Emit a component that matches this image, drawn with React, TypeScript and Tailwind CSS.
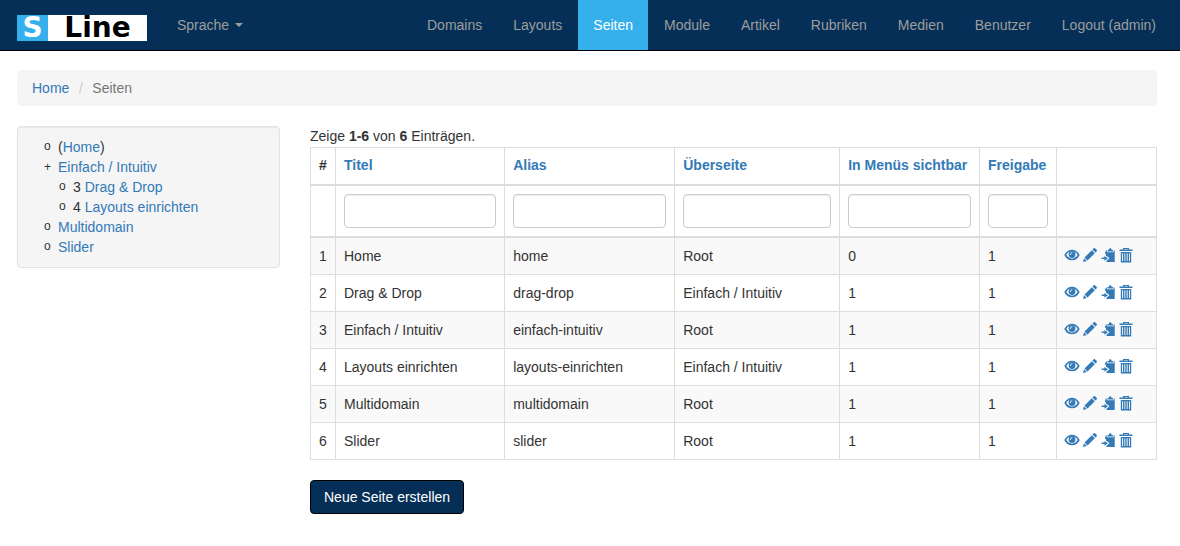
const navItems = ["Domains", "Layouts", "Seiten", "Module", "Artikel", "Rubriken", "Medien", "Benutzer", "Logout (admin)"];

const columns = ["Titel", "Alias", "Überseite", "In Menüs sichtbar", "Freigabe"];

const rows: string[][] = [
  ["Home", "home", "Root", "0", "1"],
  ["Drag & Drop", "drag-drop", "Einfach / Intuitiv", "1", "1"],
  ["Einfach / Intuitiv", "einfach-intuitiv", "Root", "1", "1"],
  ["Layouts einrichten", "layouts-einrichten", "Einfach / Intuitiv", "1", "1"],
  ["Multidomain", "multidomain", "Root", "1", "1"],
  ["Slider", "slider", "Root", "1", "1"],
];

const icon = "block size-3.5 overflow-visible";

function EyeIcon() {
  return (
    <svg viewBox="0 0 14 14" className={icon} fill="none" aria-hidden="true">
      <path
        d="M.3 7C2 4 4.400 2.500 7 2.500S12 4 13.700 7C12 10 9.600 11.500 7 11.500S2 10 .3 7Z"
        stroke="currentColor"
        strokeWidth="1.700"
        strokeLinejoin="round"
      />
      <circle cx="7" cy="6.500" r="3.400" fill="currentColor" />
      <path d="M5.400 6.400c0-1 .6-1.600 1.500-1.600" stroke="white" strokeWidth="1" strokeLinecap="round" />
    </svg>
  );
}

function PencilIcon() {
  return (
    <svg viewBox="0 0 14 14" className={icon} fill="currentColor" aria-hidden="true">
      <path d="M10.600.4c.5-.5 1.100-.5 1.600 0l1.400 1.400c.5.5.5 1.100 0 1.600l-1.200 1.200-3-3ZM8.800 2.200l3 3-7.300 7.300-3-3ZM1 10.200 3.800 13 0 14Z" />
    </svg>
  );
}

function PasteIcon() {
  return (
    <svg viewBox="0 0 14 14" className={icon} fill="currentColor" aria-hidden="true">
      <path d="M6.500 3.500V2h1.300C7.900.9 8.400.3 9.200.3s1.400.6 1.500 1.700H12v1.500Z" />
      <path d="M5 2.500h.8v1.800h6.900V2.500h1V14H5.500v-1.200L8.500 10.300 5.800 8H5V6.300L3.800 5.300Z" />
      <path d="M.6 9.500h2.800V7.900L7 10.300l-3.600 2.500v-1.700H.6Z" />
    </svg>
  );
}

function TrashIcon() {
  return (
    <svg viewBox="0 0 14 14" className={icon} fill="currentColor" aria-hidden="true">
      <path d="M4 1.500V0h6v1.500h3.500V3H.5V1.500Zm1.200 0h3.600V1H5.200Z" fillRule="evenodd" />
      <path
        d="M1.800 4h10.400v10.500H1.800Zm1.300 1.300v7.700H4V5.300Zm2.300 0v7.700h.9V5.300Zm2.300 0v7.700h.9V5.300Zm2.300 0v7.700h.9V5.300Z"
        fillRule="evenodd"
      />
    </svg>
  );
}

const actions = [
  { label: "Anzeigen", Icon: EyeIcon },
  { label: "Bearbeiten", Icon: PencilIcon },
  { label: "Kopieren", Icon: PasteIcon },
  { label: "Löschen", Icon: TrashIcon },
];

function TreeLink({ children }: { children: string }) {
  return <a href="#" className="text-[#337ab7] hover:underline">{children}</a>;
}

function Marker({ children }: { children: string }) {
  return <span className="w-3.5 shrink-0 text-xs leading-[18px]">{children}</span>;
}

function Sidebar() {
  return (
    <nav
      aria-label="Seitenbaum"
      className="rounded border border-[#e3e3e3] bg-[#f5f5f5] py-2.5 pr-2 pl-[26px] shadow-[inset_0_1px_1px_rgba(0,0,0,0.05)]"
    >
      <ul>
        <li className="flex"><Marker>o</Marker><span>(<TreeLink>Home</TreeLink>)</span></li>
        <li>
          <div className="flex">
            <span className="w-3.5 shrink-0 text-xs leading-5">+</span>
            <TreeLink>Einfach / Intuitiv</TreeLink>
          </div>
          <ul className="pl-[15px]">
            <li className="flex"><Marker>o</Marker><span>3 <TreeLink>Drag &amp; Drop</TreeLink></span></li>
            <li className="flex"><Marker>o</Marker><span>4 <TreeLink>Layouts einrichten</TreeLink></span></li>
          </ul>
        </li>
        <li className="flex"><Marker>o</Marker><TreeLink>Multidomain</TreeLink></li>
        <li className="flex"><Marker>o</Marker><TreeLink>Slider</TreeLink></li>
      </ul>
    </nav>
  );
}

function PageTable() {
  return (
    <table className="w-full table-fixed border-collapse border border-[#ddd] text-left">
      <colgroup>
        <col className="w-[25px]" />
        <col className="w-[20%]" />
        <col className="w-[20.1%]" />
        <col className="w-[19.5%]" />
        <col />
        <col className="w-[77px]" />
        <col className="w-[100px]" />
      </colgroup>
      <thead>
        <tr>
          <th className="border border-b-2 border-[#ddd] px-2 pt-[7px] pb-[9px] whitespace-nowrap">#</th>
          {columns.map((c) => (
            <th key={c} className="border border-b-2 border-[#ddd] px-2 pt-[7px] pb-[9px] whitespace-nowrap">
              <a href="#" className="text-[#337ab7] hover:underline">{c}</a>
            </th>
          ))}
          <td className="border border-b-2 border-[#ddd] p-2" />
        </tr>
        <tr>
          <td className="border border-b-2 border-[#ddd] p-2" />
          {columns.map((c) => (
            <td key={c} className="border border-b-2 border-[#ddd] p-2">
              <input
                type="text"
                aria-label={c}
                className="block h-[34px] w-full rounded border border-[#ccc] bg-white px-3 py-1.5 text-[#555] shadow-[inset_0_1px_1px_rgba(0,0,0,0.075)]"
              />
            </td>
          ))}
          <td className="border border-b-2 border-[#ddd] p-2" />
        </tr>
      </thead>
      <tbody>
        {rows.map((row, r) => (
          <tr key={row[1]} className="odd:bg-[#f9f9f9]">
            <td className="border border-[#ddd] p-2">{r + 1}</td>
            {row.map((cell, c) => (
              <td key={columns[c]} className="border border-[#ddd] p-2">{cell}</td>
            ))}
            <td className="border border-[#ddd] px-2 pt-2 pb-2.5">
              <div className="flex gap-1 text-[#337ab7]">
                {actions.map(({ label, Icon }) => (
                  <a key={label} href="#" aria-label={label}><Icon /></a>
                ))}
              </div>
            </td>
          </tr>
        ))}
      </tbody>
    </table>
  );
}

export default function App() {
  return (
    <div className="min-h-screen bg-white font-['Liberation_Sans',Arial,sans-serif] text-sm leading-5 text-[#333]">
      <header className="border-b border-black bg-[#052f56] pr-[9px] pl-[17px]">
        <div className="flex h-[50px] items-center">
          <a
            href="#"
            aria-label="SLine"
            className="mt-1.5 flex shrink-0 font-['DejaVu_Sans',sans-serif] text-[28px] leading-[26px] font-bold"
          >
            <span className="w-[31px] bg-[#36b0ed] text-center text-white">S</span>
            <span className="w-[99px] bg-white text-center text-black">Line</span>
          </a>
          <button type="button" className="ml-[15px] flex items-center gap-1.5 px-[15px] py-[15px] text-[#9d9d9d]">
            Sprache
            <svg viewBox="0 0 8 4" className="h-1 w-2" fill="currentColor" aria-hidden="true">
              <path d="M0 0h8L4 4Z" />
            </svg>
          </button>
          <nav className="ml-auto flex gap-px">
            {navItems.map((item) => (
              <a
                key={item}
                href="#"
                className={
                  item === "Seiten"
                    ? "bg-[#36b0ed] p-[15px] whitespace-nowrap text-white"
                    : "p-[15px] whitespace-nowrap text-[#9d9d9d] hover:text-white"
                }
              >
                {item}
              </a>
            ))}
          </nav>
        </div>
      </header>

      <main className="pt-[19px] pr-[23px] pb-8 pl-[17px]">
        <nav aria-label="Breadcrumb" className="mb-5 flex rounded bg-[#f5f5f5] px-[15px] py-2">
          <a href="#" className="text-[#337ab7] hover:underline">Home</a>
          <span className="w-[23px] text-center text-[#ccc]">/</span>
          <span className="text-[#777]">Seiten</span>
        </nav>
        <div className="grid grid-cols-[3fr_9fr] items-start">
          <div className="pr-[22px]"><Sidebar /></div>
          <section className="pl-2">
            <p className="mb-px">Zeige <b>1-6</b> von <b>6</b> Einträgen.</p>
            <PageTable />
            <button
              type="button"
              className="mt-5 rounded border border-black bg-[#052f56] px-[13px] py-1.5 text-white"
            >
              Neue Seite erstellen
            </button>
          </section>
        </div>
      </main>
    </div>
  );
}
